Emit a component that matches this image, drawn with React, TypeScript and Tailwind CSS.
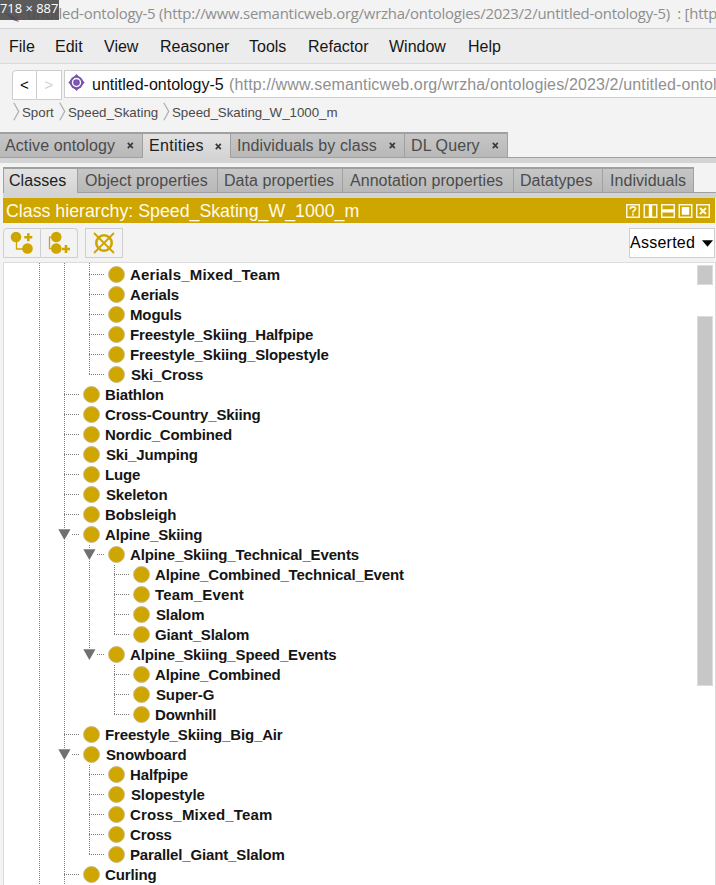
import React from "react";
import { clsx } from "clsx";

type Guide = "line" | "none";
type Node = { label: string; guides: Guide[]; last?: boolean; open?: boolean; nudge?: boolean; wide?: boolean };

const L: Guide = "line";
const N: Guide = "none";

const nodes: Node[] = [
  { label: "Aerials_Mixed_Team", guides: [L, L], wide: true },
  { label: "Aerials", guides: [L, L] },
  { label: "Moguls", guides: [L, L] },
  { label: "Freestyle_Skiing_Halfpipe", guides: [L, L] },
  { label: "Freestyle_Skiing_Slopestyle", guides: [L, L] },
  { label: "Ski_Cross", guides: [L, L], last: true, nudge: true },
  { label: "Biathlon", guides: [L] },
  { label: "Cross-Country_Skiing", guides: [L] },
  { label: "Nordic_Combined", guides: [L] },
  { label: "Ski_Jumping", guides: [L], nudge: true },
  { label: "Luge", guides: [L] },
  { label: "Skeleton", guides: [L], nudge: true },
  { label: "Bobsleigh", guides: [L] },
  { label: "Alpine_Skiing", guides: [L], open: true },
  { label: "Alpine_Skiing_Technical_Events", guides: [L, L], open: true },
  { label: "Alpine_Combined_Technical_Event", guides: [L, L, L] },
  { label: "Team_Event", guides: [L, L, L], wide: true },
  { label: "Slalom", guides: [L, L, L], nudge: true },
  { label: "Giant_Slalom", guides: [L, L, L], last: true },
  { label: "Alpine_Skiing_Speed_Events", guides: [L, L], open: true, last: true },
  { label: "Alpine_Combined", guides: [L, L, N] },
  { label: "Super-G", guides: [L, L, N], nudge: true },
  { label: "Downhill", guides: [L, L, N], last: true },
  { label: "Freestyle_Skiing_Big_Air", guides: [L] },
  { label: "Snowboard", guides: [L], open: true, nudge: true },
  { label: "Halfpipe", guides: [L, L] },
  { label: "Slopestyle", guides: [L, L], nudge: true },
  { label: "Cross_Mixed_Team", guides: [L, L], wide: true },
  { label: "Cross", guides: [L, L] },
  { label: "Parallel_Giant_Slalom", guides: [L, L], last: true },
  { label: "Curling", guides: [L] },
];

const dotsDown = "w-px bg-[repeating-linear-gradient(to_bottom,#7d7d7d_0_1px,transparent_1px_2px)]";
const dotsAcross = "h-px bg-[repeating-linear-gradient(to_right,#7d7d7d_0_1px,transparent_1px_2px)]";

function Row({ node }: { node: Node }) {
  return (
    <div className="flex h-5 shrink-0">
      {node.guides.map((g, i) => (
        <div key={i} className="h-5 w-[25px] shrink-0">
          {g === "line" && <div className={clsx("h-full", dotsDown)} />}
        </div>
      ))}
      <div className="relative h-5 w-[19px] shrink-0">
        <div className={clsx("absolute left-0 top-0", dotsDown, node.last ? "h-[10px]" : "h-5")} />
        <div className={clsx("absolute left-0 top-[9px] w-[15px]", dotsAcross)} />
        {node.open && (
          <svg className="absolute -left-[6px] top-[3px] bg-white" width="13" height="13" viewBox="0 0 13 13">
            <path d="M.3 1.2h12.2L6.4 12z" fill="#707070" />
          </svg>
        )}
      </div>
      <div className="mt-px h-[17px] w-[17px] shrink-0 rounded-full border border-[#cbbd91] bg-[#cfa500]" />
      <span
        className={clsx(
          "whitespace-pre text-[15px] leading-[19px] font-bold text-[#151515]",
          node.nudge ? "ml-[6px]" : "ml-[5px]",
          node.wide ? "tracking-[0.17px]" : "tracking-[-0.14px]",
        )}
      >
        {node.label}
      </span>
    </div>
  );
}

const mainTabs = [
  { label: "Active ontology", width: "w-[143px] pl-[5px]" },
  { label: "Entities", width: "w-[88px] pl-[6px]", active: true },
  { label: "Individuals by class", width: "w-[174px] pl-[6px]" },
  { label: "DL Query", width: "w-[103px] pl-[6px]" },
];

const subTabs = [
  { label: "Classes", width: "w-[75px] pl-[5px]", active: true },
  { label: "Object properties", width: "w-[140px] pl-[7px]" },
  { label: "Data properties", width: "w-[125px] pl-[6px]" },
  { label: "Annotation properties", width: "w-[171px] pl-[7px]" },
  { label: "Datatypes", width: "w-[89px] pl-[6px]" },
  { label: "Individuals", width: "w-[91px] pl-[7px]" },
];

function Chevron() {
  return (
    <svg width="7" height="19" viewBox="0 0 7 19" className="shrink-0">
      <path d="M.8.8 5.7 9.5.8 18.2" fill="none" stroke="#b0b0b0" strokeWidth="1.3" />
    </svg>
  );
}

function PanelButtons() {
  return (
    <svg width="85" height="14" viewBox="0 0 85 14" className="ml-auto mr-[4px]">
      <g fill="none" stroke="#fff8dc" strokeWidth="1.5">
        <path d="M.75.75h12.5v12.5H.75zM18.25.75h12.5v12.5h-12.5zM35.75.75h12.5v12.5h-12.5zM53.25.75h12.5v12.5h-12.5zM70.75.75h12.5v12.5h-12.5z" />
        <path d="M4.2 5.2c0-3 5.3-3 5.3-.4 0 1.8-2.6 1.6-2.6 3.6M6.9 9.6v1.8" strokeWidth="1.8" />
        <path d="m74 4 6 6m0-6-6 6" strokeWidth="2.2" />
      </g>
      <path d="M22.8 1h3.4v12h-3.4zM36 5.2h12v3.4H36zM55.8 3h7.4v7.8h-7.4z" fill="#fff" />
    </svg>
  );
}

export default function App() {
  return (
    <div className="relative flex h-[885px] w-[716px] flex-col overflow-hidden bg-[#f3f3f3] font-['Liberation_Sans',Arial,sans-serif]">
      <div className="flex h-[29px] shrink-0 items-center overflow-hidden border-b border-[#d2d2d2] pb-[2px] pl-[27px]">
        <span className="whitespace-pre font-['Open_Sans','Noto_Sans',sans-serif] text-[14.9px] tracking-[-0.22px] text-[#8e8e8e]">
          {"untitled-ontology-5 (http://www.semanticweb.org/wrzha/ontologies/2023/2/untitled-ontology-5)  : [http://www"}
        </span>
      </div>
      <svg className="absolute left-[5px] top-[11px]" width="16" height="11" viewBox="0 0 16 11">
        <path d="M0 2 8 5l6 6-6-2z" fill="#7650a0" />
        <path d="m9 3 4 3 1 5z" fill="#d87c47" />
      </svg>
      <div className="absolute left-0 top-0 flex h-5 w-[59px] items-center bg-[#4a4a4a]/90 pb-[2px] font-['Open_Sans',sans-serif] text-[12.9px] whitespace-pre text-white">
        718 × 887
      </div>

      <nav className="flex h-[35px] shrink-0 items-center border-b border-[#d9d9d9] bg-[#ececec] pt-[2px] text-[16px] text-[#161616]">
        <span className="w-[46px] shrink-0 pl-[9px]">File</span>
        <span className="ml-[9px] w-[49px]">Edit</span>
        <span className="w-[56px]">View</span>
        <span className="w-[89px]">Reasoner</span>
        <span className="w-[59px]">Tools</span>
        <span className="w-[81px]">Refactor</span>
        <span className="w-[79px]">Window</span>
        <span>Help</span>
      </nav>

      <div className="mt-[6px] flex h-[30px] shrink-0 items-start pl-[12px]">
        <div className="flex h-[30px] w-[25px] items-center justify-center rounded-tl border border-[#cdcdcd] bg-white text-[15px] text-black">&lt;</div>
        <div className="flex h-[30px] w-[25px] items-center justify-center border border-l-0 border-[#cdcdcd] bg-white text-[15px] text-[#cfcfcf]">&gt;</div>
        <div className="ml-[2px] flex h-[28px] w-[652px] shrink-0 items-center overflow-hidden border-y border-l border-[#cdcdcd] bg-white pl-[3px] text-[16px]">
          <svg width="17" height="17" viewBox="0 0 17 17" className="-mt-[3px] shrink-0">
            <path d="m8.5 0 2.5 2.8 2.9 2.9 2.8 2.8-2.8 2.8-2.9 2.9-2.5 2.8L6 14.2l-2.9-2.9L.3 8.5l2.8-2.8L6 2.8z" fill="#7752ac" />
            <circle cx="8.5" cy="8.5" r="6.6" fill="#7752ac" />
            <circle cx="8.5" cy="8.5" r="4" fill="none" stroke="#fff" strokeWidth="1.4" />
            <circle cx="8.5" cy="8.5" r="2" fill="#8058b0" />
          </svg>
          <span className="ml-[7px] mt-[2px] whitespace-pre text-[#101010]">untitled-ontology-5 </span>
          <span className="ml-[1px] mt-[2px] whitespace-pre tracking-[0.14px] text-[#909090]">(http://www.semanticweb.org/wrzha/ontologies/2023/2/untitled-ontology-5)</span>
        </div>
      </div>

      <div className="mt-[2px] flex h-[19px] shrink-0 items-center pl-[13px] text-[13.3px] text-[#4a4a4a]">
        <Chevron />
        <span className="mt-[2px] ml-[2px] w-[37px]">Sport</span>
        <Chevron />
        <span className="mt-[2px] ml-[2px] w-[95px]">Speed_Skating</span>
        <Chevron />
        <span className="mt-[2px] ml-[2px]">Speed_Skating_W_1000_m</span>
      </div>

      <div className="mt-[11px] flex h-[31px] shrink-0 border-b-[5px] border-[#d4d4d4]">
        {mainTabs.map((t) => (
          <div key={t.label} className={clsx("flex shrink-0 items-center justify-between border-t-2 border-r border-[#a0a0a0] pr-[8px] text-[16px] whitespace-pre", t.width, t.active ? "bg-linear-to-b from-[#e2e2e2] to-[#d4d4d4] tracking-[0.3px] text-[#202020]" : "border-b bg-linear-to-b from-[#c6c6c6] to-[#b8b8b8] tracking-[0.1px] text-[#4b4b4b]")}>
            {t.label}
            <svg width="7" height="7" viewBox="0 0 7 7"><path d="m.8.8 5 5.4m0-5.4-5 5.4" stroke="#3c3c3c" strokeWidth="1.7" /></svg>
          </div>
        ))}
        <div className="flex-1 border-b border-[#a0a0a0]" />
      </div>

      <div className="mt-[4px] ml-[3px] flex h-[31px] shrink-0 border-b-[5px] border-[#d4d4d4]">
        {subTabs.map((t) => (
          <div key={t.label} className={clsx("flex shrink-0 items-center border-t-2 border-r border-[#a0a0a0] text-[16px] tracking-[0.05px] whitespace-pre", t.width, t.active ? "border-l bg-linear-to-b from-[#e2e2e2] to-[#d4d4d4] text-[#202020]" : "border-b bg-linear-to-b from-[#c6c6c6] to-[#b8b8b8] text-[#4b4b4b]")}>
            {t.label}
          </div>
        ))}
        <div className="flex-1 border-b border-[#a0a0a0]" />
      </div>

      <div className="ml-[3px] mr-px flex h-[25px] shrink-0 items-center bg-[#cfa500] pl-[3px] text-[17.75px] text-[#fffbe8]">
        <span className="mt-px whitespace-pre">Class hierarchy: Speed_Skating_W_1000_m</span>
        <PanelButtons />
      </div>

      <div className="mt-[5px] ml-[3px] flex h-[30px] shrink-0 items-stretch">
        <div className="flex w-[38px] items-center justify-center rounded-tl border border-[#cfcfcf]">
          <svg width="24" height="24" viewBox="0 0 24 24" fill="none" stroke="#cfa500" className="-mt-px">
            <path d="M6.5 6v12h8" strokeWidth="1.3" />
            <circle cx="6" cy="6" r="5.3" fill="#cfa500" stroke="none" />
            <circle cx="17.5" cy="17.5" r="5.3" fill="#cfa500" stroke="none" />
            <path d="M18.3 2.2v8M14.3 6.2h8" strokeWidth="2.6" />
          </svg>
        </div>
        <div className="flex w-[37px] items-center justify-center rounded-tr border border-l-0 border-[#cfcfcf]">
          <svg width="24" height="24" viewBox="0 0 24 24" fill="none" stroke="#cfa500" className="-mt-px">
            <path d="M8 6.2H2.5v11.5H8" strokeWidth="1.3" />
            <circle cx="9.3" cy="6" r="5.3" fill="#cfa500" stroke="none" />
            <circle cx="9.3" cy="17.5" r="5.3" fill="#cfa500" stroke="none" />
            <path d="M19 14v8M15 18h8" strokeWidth="2.6" />
          </svg>
        </div>
        <div className="ml-[7px] flex w-[38px] items-center justify-center border border-[#cfcfcf]">
          <svg width="22" height="22" viewBox="0 0 22 22" fill="none" stroke="#cfa500">
            <circle cx="11" cy="11" r="7.7" strokeWidth="2.6" />
            <path d="m1 1 20 20M21 1 1 21" strokeWidth="1.9" />
          </svg>
        </div>
        <div className="ml-auto mr-px flex w-[86px] items-center border border-[#cfcfcf] bg-white text-[16px] tracking-[0.25px] text-black">
          Asserted
          <svg width="11" height="7" viewBox="0 0 11 7" className="ml-[7px] shrink-0"><path d="M0 .3h11L5.5 6.7z" /></svg>
        </div>
      </div>

      <div className="mt-[4px] ml-[3px] flex min-h-0 flex-1 justify-between overflow-hidden border-t border-r border-l border-[#dcdcdc] bg-white">
        <div className="flex flex-col pl-[35px]">
          <div className="flex h-[2px] shrink-0 gap-[24px]">
            <div className={dotsDown} />
            <div className={dotsDown} />
            <div className={dotsDown} />
          </div>
          {nodes.map((n) => <Row key={n.label} node={n} />)}
        </div>
        <div className="mr-[2px] w-[16px] shrink-0 pt-[2px]">
          <div className="h-[20px] border border-[#dcdcdc] bg-[#c7c7c7]" />
          <div className="mt-[31px] h-[370px] border border-[#dcdcdc] bg-[#c7c7c7]" />
        </div>
      </div>
    </div>
  );
}
